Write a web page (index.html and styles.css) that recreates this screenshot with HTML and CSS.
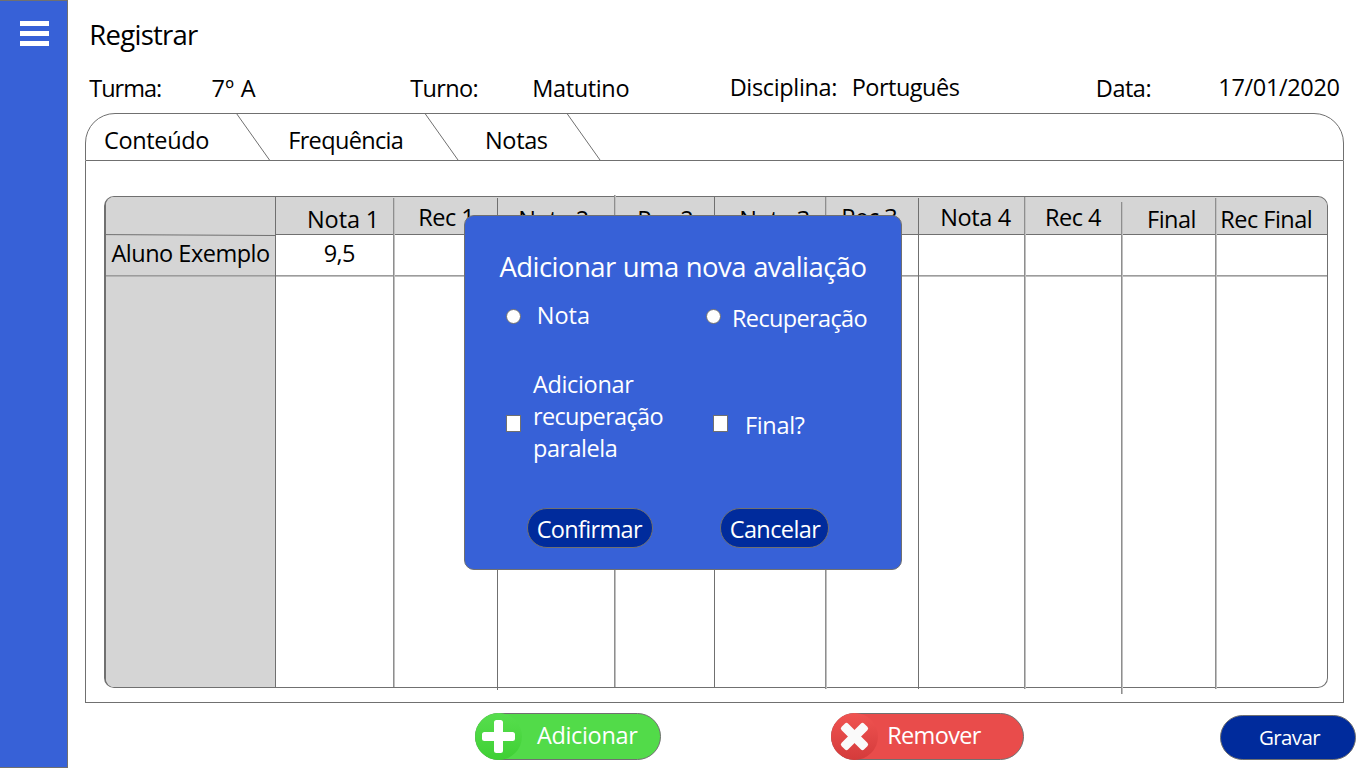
FILE: index.html
```html
<!DOCTYPE html>
<html lang="pt-BR">
<head>
<meta charset="utf-8">
<title>Registrar</title>
<link rel="stylesheet" href="styles.css">
</head>
<body>
<aside class="sidebar">
  <button class="menu" aria-label="Menu"><i></i><i></i><i></i></button>
</aside>
<main class="main">
  <h1 class="title">Registrar</h1>
  <div class="info">
    <span class="low tighter">Turma:</span><span class="low open">7º A</span>
    <span class="low tight">Turno:</span><span class="low loose">Matutino</span>
    <span class="loose">Disciplina:</span><span>Português</span>
    <span class="low">Data:</span><span class="loose">17/01/2020</span>
  </div>
  <section class="panel">
    <nav class="tabs">
      <a class="tab tab-content loose">Conteúdo</a>
      <svg class="slant" viewBox="0 0 34 46"><path d="M0.5 -0.5L33.5 46"/></svg>
      <a class="tab tab-attendance tight">Frequência</a>
      <svg class="slant" viewBox="0 0 34 46"><path d="M0 -0.5L33 46"/></svg>
      <a class="tab tab-grades loose">Notas</a>
      <svg class="slant" viewBox="0 0 34 46"><path d="M0 -0.5L33 46"/></svg>
    </nav>
    <div class="sheet">
      <div class="grades">
        <div class="col names">
          <div class="head"><svg class="rule" viewBox="0 0 169 3"><path d="M0 0.6L169 1.5"/></svg></div>
          <div class="cell">Aluno Exemplo</div>
        </div>
        <div class="col c1"><div class="head even">Nota 1</div><div class="cell tight">9,5</div></div>
        <div class="col c2 soft"><div class="head up">Rec 1</div></div>
        <div class="col c3"><div class="head loose">Nota 2</div></div>
        <div class="col c4 soft"><div class="head">Rec 2</div></div>
        <div class="col c5"><div class="head loose">Nota 3</div></div>
        <div class="col c6 soft"><div class="head up">Rec 3</div></div>
        <div class="col c7"><div class="head up loose">Nota 4</div></div>
        <div class="col c8 soft"><div class="head up">Rec 4</div></div>
        <div class="col c9 soft"><div class="head">Final</div></div>
        <div class="col c10 soft"><div class="head">Rec Final</div></div>
      </div>
    </div>
  </section>
  <footer class="actions">
    <button class="pill add">
      <svg class="badge" viewBox="0 0 47 47">
        <defs><linearGradient id="green" x1="0" y1="0" x2="0" y2="1"><stop offset="0" stop-color="#57de4e"/><stop offset="1" stop-color="#3fd034"/></linearGradient></defs>
        <circle cx="23.5" cy="23.5" r="23.5" fill="url(#green)"/>
        <path fill="#fff" d="M21.5 7h4a2.5 2.5 0 0 1 2.500 2.500v9.500h9.500a2.500 2.500 0 0 1 2.500 2.500v4a2.500 2.500 0 0 1-2.500 2.500h-9.500v9.500a2.500 2.500 0 0 1-2.500 2.500h-4a2.500 2.500 0 0 1-2.500-2.500v-9.500h-9.500a2.500 2.500 0 0 1-2.500-2.500v-4a2.500 2.500 0 0 1 2.500-2.500h9.500v-9.500a2.500 2.500 0 0 1 2.500-2.500z"/>
      </svg>
      <span class="loose">Adicionar</span>
    </button>
    <button class="pill remove">
      <svg class="badge" viewBox="0 0 47 47">
        <defs><linearGradient id="red" x1="0" y1="0" x2="0" y2="1"><stop offset="0" stop-color="#f05351"/><stop offset="1" stop-color="#d43b3b"/></linearGradient></defs>
        <circle cx="23.5" cy="23.5" r="23.5" fill="url(#red)"/>
        <g fill="#fafafa" transform="rotate(45 23.5 23.5)"><rect x="7.500" y="18.800" width="32" height="9.400" rx="2.500"/><rect x="18.800" y="7.500" width="9.400" height="32" rx="2.500"/></g>
      </svg>
      <span class="tight">Remover</span>
    </button>
    <button class="pill save">Gravar</button>
  </footer>
</main>
<div class="dialog" role="dialog">
  <h2 class="dialog-title">Adicionar uma nova avaliação</h2>
  <div class="choices">
    <label class="choice type-grade"><i class="mark radio"></i><span class="even">Nota</span></label>
    <label class="choice type-makeup"><i class="mark radio"></i><span class="tight">Recuperação</span></label>
  </div>
  <div class="choices extras">
    <label class="choice parallel"><i class="mark box"></i><span><span class="loose">Adicionar</span><br><span class="tight">recuperação</span><br>paralela</span></label>
    <label class="choice final"><i class="mark box"></i><span class="loose">Final?</span></label>
  </div>
  <div class="dialog-actions">
    <button class="confirm">Confirmar</button>
    <button class="cancel">Cancelar</button>
  </div>
</div>
</body>
</html>
```
FILE: styles.css
```css
* { box-sizing: border-box; }
body {
  margin: 0;
  width: 1366px;
  height: 768px;
  display: flex;
  overflow: hidden;
  position: relative;
  background: #fff;
  color: #000;
  font: 23.5px/32px "Open Sans", "Noto Sans", sans-serif;
  letter-spacing: -0.5px;
  white-space: nowrap;
}
button { font: inherit; letter-spacing: inherit; color: inherit; padding: 0; border: 0; background: none; text-align: left; display: block; }
svg { display: block; }
.tighter { letter-spacing: -1px; }
.tight { letter-spacing: -0.65px; }
.loose { letter-spacing: -0.35px; }
.even { letter-spacing: 0; }
.open { letter-spacing: 0.3px; }

.sidebar {
  width: 68px;
  flex: none;
  background: #3761d7;
  border: 1px solid #707070;
  border-left: 0;
  padding: 20px 0 0 20px;
}
.menu { display: grid; gap: 5px; }
.menu i { width: 29px; height: 5px; background: #fff; }

.main { flex: 1; display: flex; flex-direction: column; }
.title {
  margin: 15px 0 0 21.3px;
  font-size: 27.5px;
  line-height: 40px;
  font-weight: 400;
  letter-spacing: -0.74px;
}
.info {
  height: 58px;
  padding: 16px 0 0 21.2px;
  display: grid;
  grid-template-columns: 122.300px 198.700px 122px 197.500px 122px 244.200px 122.500px 130px;
}
.info .low { padding-top: 1px; }

.panel { width: 1259px; margin-left: 17px; }
.tabs {
  height: 48px;
  border: 1px solid #707070;
  border-radius: 30px 30px 0 0;
  display: flex;
}
.tab { padding-top: 10px; flex: none; }
.tab-content { width: 150px; padding-left: 18px; }
.tab-attendance { width: 155px; padding-left: 18.200px; }
.tab-grades { width: 108px; padding-left: 26px; }
.slant { width: 34px; height: 46px; flex: none; fill: none; stroke: #707070; stroke-width: 1; }
.sheet {
  height: 542px;
  border: 1px solid #707070;
  border-top: 0;
  padding: 35px 0 0 18px;
}
.grades {
  width: 1224px;
  height: 492px;
  border: 1px solid #707070;
  border-left-width: 2px;
  border-radius: 10px;
  display: flex;
  background: linear-gradient(#d5d5d5 37px, #707070 37px 38px, #fff 38px 78px, #9c9c9c 78px 79px, #c0c0c0 79px 80px, #fff 80px) padding-box;
}
.col { position: relative; flex: none; }
.col::before {
  content: "";
  position: absolute;
  left: 0;
  top: var(--top, 0);
  bottom: var(--bottom, 0);
  width: 1px;
  background: #707070;
}
.col.soft::before { width: 2px; background: linear-gradient(90deg, #8e8e8e 50%, #c0c0c0 50%); }
.head { height: 38px; padding-top: 6px; }
.head.up { padding-top: 4px; }
.cell { padding-top: 2px; }
.names {
  width: 169px;
  border-radius: 8px 0 0 8px;
  background: linear-gradient(#d5d5d5 78px, #9c9c9c 78px 79px, #b4b4b4 79px 80px, #d5d5d5 80px);
}
.names::before { display: none; }
.names .head { padding-top: 37px; }
.names .cell { padding-left: 5.500px; }
.rule { width: 169px; height: 3px; stroke: #707070; stroke-width: 1; }
.c1 { width: 118px; padding-left: 32px; }
.c1 .head { letter-spacing: -0.1px; }
.c1 .cell { padding-left: 16.800px; }
.c2 { width: 104px; padding-left: 25.200px; --top: 1px; }
.c3 { width: 117px; padding-left: 21.200px; --top: 1px; --bottom: -3px; }
.c4 { width: 100px; padding-left: 23.200px; --top: -2px; }
.c5 { width: 111px; padding-left: 25.200px; }
.c6 { width: 93px; padding-left: 16.200px; --bottom: -2px; }
.c7 { width: 106px; padding-left: 22.200px; --top: 1px; --bottom: -2px; }
.c8 { width: 97px; padding-left: 21px; --bottom: -2px; }
.c9 { width: 94px; padding-left: 26px; --top: 5px; --bottom: -7px; }
.c10 { width: 112px; padding-left: 5.200px; --top: 1px; --bottom: -2px; }

.actions { display: flex; padding: 10px 0 0 407px; color: #fff; }
.pill { height: 47px; border: 1px solid #707070; border-radius: 23.500px; display: flex; flex: none; }
.badge { width: 47px; height: 47px; margin: -1px 0 0 -1px; flex: none; }
.pill span { padding-top: 5px; }
.add { width: 186px; background: #52db49; margin-right: 170px; }
.add span { padding-left: 15px; }
.remove { width: 193px; background: #e94c4b; margin-right: 196px; }
.remove span { padding-left: 9.200px; }
.save {
  width: 136px;
  height: 45px;
  margin-top: 2px;
  padding: 5px 0 0 38px;
  background: #002b9c;
  font-size: 20.500px;
  letter-spacing: -0.6px;
}

.dialog {
  position: absolute;
  left: 464px;
  top: 215px;
  width: 438px;
  height: 355px;
  padding-top: 31px;
  border: 1px solid #707070;
  border-radius: 10px;
  background: #3761d7;
  color: #fff;
}
.dialog-title {
  margin: 0 0 0 34.500px;
  font-size: 27.500px;
  line-height: 40px;
  font-weight: 400;
  letter-spacing: -0.57px;
  word-spacing: 0.600px;
}
.choices { display: flex; padding: 12px 0 0 41px; height: 81px; }
.choice { display: flex; flex: none; }
.mark { width: 15px; height: 15px; border: 1px solid #707070; background: #fff; flex: none; }
.radio { border-radius: 50%; margin-top: 10px; }
.type-grade { width: 200px; gap: 15.700px; }
.type-makeup { gap: 11px; }
.type-makeup span { padding-top: 3px; }
.extras { padding-top: 0; height: 140px; }
.box { height: 17px; margin-top: 47px; }
.parallel { width: 207px; gap: 12px; }
.final { gap: 17px; }
.final > span { padding-top: 41px; }
.dialog-actions { display: flex; gap: 67px; padding-left: 62px; }
.confirm, .cancel {
  height: 40px;
  border: 1px solid #707070;
  border-radius: 20px;
  background: #002b9c;
  padding: 2px 0 0 8.700px;
}
.confirm { width: 126px; letter-spacing: -0.67px; }
.cancel { width: 109px; letter-spacing: -0.6px; }
```
